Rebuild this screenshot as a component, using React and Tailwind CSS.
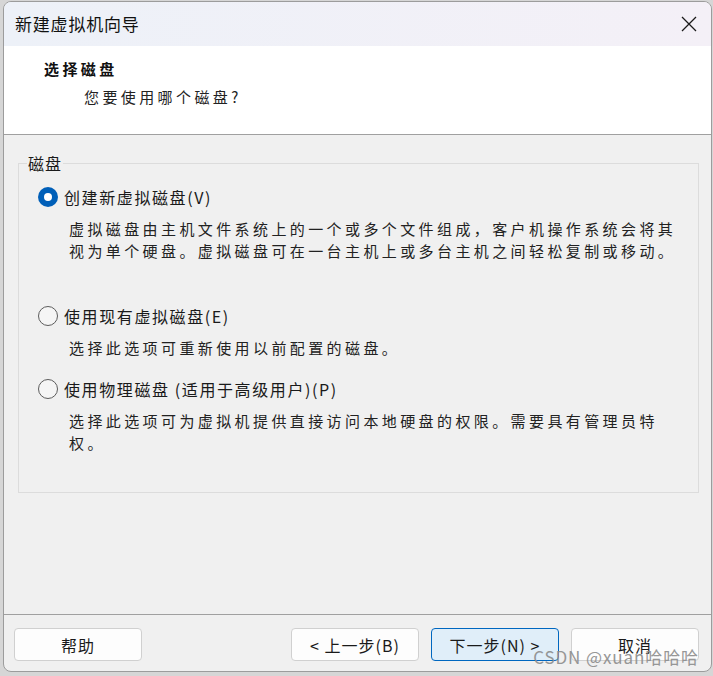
import React from 'react';

const font = { fontFamily: '"Noto Sans CJK SC", "Noto Sans", sans-serif' };

const Radio = ({ checked }) => (
    checked ? (
        <span className="flex h-[20px] w-[20px] shrink-0 items-center justify-center rounded-full bg-[#005fb8]">
            <span className="h-[8px] w-[8px] rounded-full bg-white"></span>
        </span>
    ) : (
        <span className="h-[20px] w-[20px] shrink-0 rounded-full border border-[#5c5c5c] bg-[#f5f5f5]"></span>
    )
);

const Option = ({ checked, label, lines, className }) => (
    <div className={className}>
        <div className="flex h-[24px] items-center gap-[6px]">
            <Radio checked={checked} />
            <span className="text-[16px] leading-[24px] tracking-[1.6px] text-[#1a1a1a]">{label}</span>
        </div>
        <div className="ml-[31px] mt-[9px] text-[15px] leading-[22px] tracking-[3.4px] text-[#222]">
            {lines.map((l, i) => <div key={i}>{l}</div>)}
        </div>
    </div>
);

const Button = ({ children, primary }) => (
    <button
        className={`h-[33px] w-[128px] rounded-[4px] border text-[16px] tracking-[1px] text-[#1a1a1a] ${primary ? 'border-[#0067c0] bg-[#e0eef9]' : 'border-[#d0d0d0] bg-[#fdfdfd]'}`}
    >
        {children}
    </button>
);

export default function App() {
    return (
        <div className="h-[676px] w-[713px] overflow-hidden bg-[#d6d6d6] pl-[3px] pt-[1px]" style={font}>
            <div className="relative flex h-[671px] w-[709px] flex-col overflow-hidden rounded-[8px] border border-[#9c9c9c] bg-[#f0f0f0]">
                {/* title bar */}
                <div className="flex h-[44px] shrink-0 items-center justify-between bg-gradient-to-r from-[#edf1f8] to-[#f4f0f7] pl-[11px] pr-[14px]">
                    <span className="text-[17px] tracking-[0.8px] text-[#111]">新建虚拟机向导</span>
                    <svg width="16" height="16" viewBox="0 0 16 16" className="mb-[1px]">
                        <path d="M1 1 L15 15 M15 1 L1 15" stroke="#1a1a1a" strokeWidth="1.3" fill="none" />
                    </svg>
                </div>

                {/* header */}
                <div className="h-[89px] shrink-0 border-b border-[#a0a0a0] bg-white pt-[12px]">
                    <div className="ml-[40px] text-[15px] font-bold leading-[22px] tracking-[3.4px] text-[#111]">选择磁盘</div>
                    <div className="ml-[80px] mt-[6px] text-[15px] leading-[22px] tracking-[3.4px] text-[#222]">您要使用哪个磁盘?</div>
                </div>

                {/* body */}
                <div className="flex-1 pl-[14px] pr-[12px] pt-[28px]">
                    <div className="relative border border-[#dcdcdc] pb-[38px] pl-[19px] pt-[21px]">
                        <span className="absolute -top-[12px] left-[8px] bg-[#f0f0f0] px-[1px] text-[16px] leading-[22px] tracking-[1px] text-[#1a1a1a]">磁盘</span>
                        <Option
                            checked
                            label="创建新虚拟磁盘(V)"
                            lines={[
                                '虚拟磁盘由主机文件系统上的一个或多个文件组成，客户机操作系统会将其',
                                '视为单个硬盘。虚拟磁盘可在一台主机上或多台主机之间轻松复制或移动。',
                            ]}
                        />
                        <Option
                            className="mt-[42px]"
                            label="使用现有虚拟磁盘(E)"
                            lines={['选择此选项可重新使用以前配置的磁盘。']}
                        />
                        <Option
                            className="mt-[18px]"
                            label="使用物理磁盘 (适用于高级用户)(P)"
                            lines={[
                                '选择此选项可为虚拟机提供直接访问本地硬盘的权限。需要具有管理员特',
                                '权。',
                            ]}
                        />
                    </div>
                </div>

                {/* footer */}
                <div className="flex h-[57px] shrink-0 items-start justify-between border-t border-[#a0a0a0] pl-[10px] pr-[12px] pt-[13px]">
                    <Button>帮助</Button>
                    <div className="flex gap-[12px]">
                        <Button>&lt; 上一步(B)</Button>
                        <Button primary>下一步(N) &gt;</Button>
                        <Button>取消</Button>
                    </div>
                </div>

                <span className="absolute bottom-[4px] right-[12px] text-[17px] leading-[20px] tracking-[0.9px] text-[#8c8c8c] opacity-90">CSDN @xuan哈哈哈</span>
            </div>
        </div>
    );
}
